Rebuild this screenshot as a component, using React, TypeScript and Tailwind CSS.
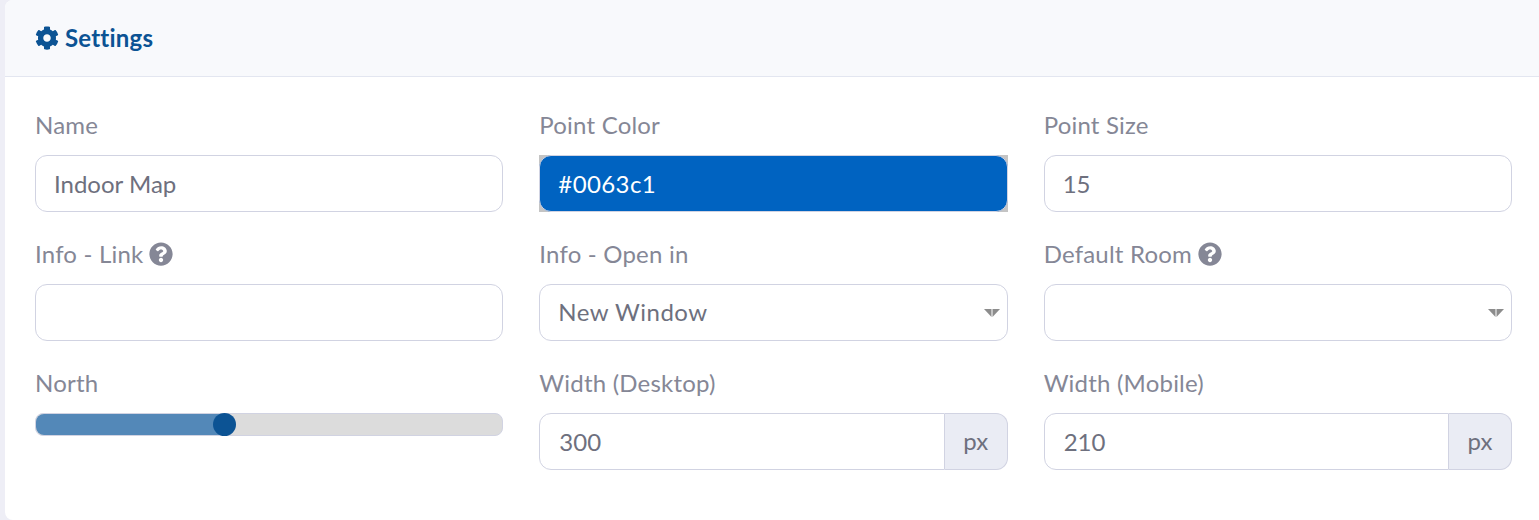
import { FaCog, FaQuestionCircle } from "react-icons/fa";

const font = "font-['Lato','Noto_Sans',sans-serif]";
const inputBox = "block w-full h-[57px] rounded-[12px] border border-[#d1d3e2] bg-white px-[18px] pb-[1px] text-[24px] text-[#6e707e] outline-none";

function Label({ text, help }: { text: string; help?: boolean }) {
  return (
    <label className="mb-[12px] flex h-[36px] items-center gap-[6px] pb-[1px] text-[24px] tracking-[0.2px] text-[#858796]">
      {text}
      {help && <FaQuestionCircle className="text-[24px] text-[#858796]" />}
    </label>
  );
}

function SelectBox({ value }: { value: string }) {
  return (
    <div className={`${inputBox} flex items-center justify-between pr-[7px] tracking-[0.5px]`}>
      <span>{value}</span>
      <svg width="16" height="8" viewBox="0 0 16 8" className="mt-[1px]">
        <polygon points="0,0 7.5,0 7.5,8" fill="#8c8c8c" />
        <polygon points="8.5,0 16,0 8.5,8" fill="#8c8c8c" />
      </svg>
    </div>
  );
}

function Suffixed({ value }: { value: string }) {
  return (
    <div className="flex h-[57px] w-full">
      <input
        readOnly
        value={value}
        className="h-full min-w-0 flex-1 rounded-l-[12px] border border-[#d1d3e2] bg-white px-[19px] pb-[1px] text-[24px] text-[#6e707e] outline-none"
      />
      <span className="flex w-[63px] items-center justify-center rounded-r-[12px] border border-l-0 border-[#d1d3e2] bg-[#eaecf4] pb-[1px] text-[24px] text-[#6e707e]">
        px
      </span>
    </div>
  );
}

export default function App() {
  return (
    <div className={`${font} h-[520px] w-full overflow-hidden bg-[#eeeef6] pl-[5px]`}>
      <div className="h-full overflow-hidden rounded-l-[8px] bg-white">
        <div className="flex h-[77px] items-center gap-[6px] border-b border-[#e3e6f0] bg-[#f8f9fc] pl-[30px] text-[#0c5394]">
          <FaCog className="text-[24px]" />
          <h6 className="text-[24px] font-bold tracking-[0.2px]">Settings</h6>
        </div>

        <div className="grid grid-cols-3 gap-x-[36px] pt-[30px] pl-[30px] pr-[27px]">
          <div className="mb-[24px]">
            <Label text="Name" />
            <input readOnly value="Indoor Map" className={inputBox} />
          </div>
          <div className="mb-[24px]">
            <Label text="Point Color" />
            <div className="h-[57px] bg-[#c4c4c4]">
              <input
                readOnly
                value="#0063c1"
                className="block h-full w-full rounded-[12px] border border-[#d1d3e2] bg-[#0063c1] px-[18px] pb-[1px] text-[24px] tracking-[0.4px] text-white outline-none"
              />
            </div>
          </div>
          <div className="mb-[24px]">
            <Label text="Point Size" />
            <input readOnly value="15" className={inputBox} />
          </div>

          <div className="mb-[24px]">
            <Label text="Info - Link" help />
            <input readOnly value="" className={inputBox} />
          </div>
          <div className="mb-[24px]">
            <Label text="Info - Open in" />
            <SelectBox value="New Window" />
          </div>
          <div className="mb-[24px]">
            <Label text="Default Room" help />
            <SelectBox value="" />
          </div>

          <div>
            <Label text="North" />
            <div className="relative h-[23px] rounded-[8px] border border-[#d1d3e2] bg-[#dcdcdc]">
              <div className="h-full w-[190px] rounded-l-[8px] bg-[#5388b8]" />
              <div className="absolute left-[177px] top-[-1px] h-[23px] w-[23px] rounded-full bg-[#0c5394]" />
            </div>
          </div>
          <div>
            <Label text="Width (Desktop)" />
            <Suffixed value="300" />
          </div>
          <div>
            <Label text="Width (Mobile)" />
            <Suffixed value="210" />
          </div>
        </div>
      </div>
    </div>
  );
}
